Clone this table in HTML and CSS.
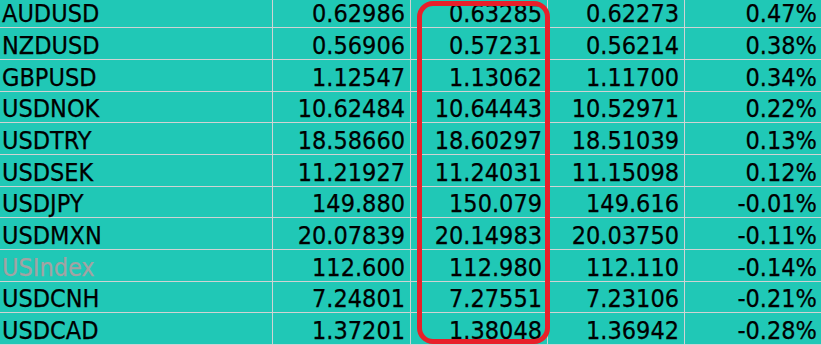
FILE: index.html
```html
<!DOCTYPE html>
<html>
<head>
<meta charset="utf-8">
<link rel="stylesheet" href="styles.css">
</head>
<body>
<div class="board">
  <div class="grid">
    <div class="c sym">AUDUSD</div><div class="c">0.62986</div><div class="c">0.63285</div><div class="c">0.62273</div><div class="c last">0.47%</div>
    <div class="c sym">NZDUSD</div><div class="c">0.56906</div><div class="c">0.57231</div><div class="c">0.56214</div><div class="c last">0.38%</div>
    <div class="c sym">GBPUSD</div><div class="c">1.12547</div><div class="c">1.13062</div><div class="c">1.11700</div><div class="c last">0.34%</div>
    <div class="c sym">USDNOK</div><div class="c">10.62484</div><div class="c">10.64443</div><div class="c">10.52971</div><div class="c last">0.22%</div>
    <div class="c sym">USDTRY</div><div class="c">18.58660</div><div class="c">18.60297</div><div class="c">18.51039</div><div class="c last">0.13%</div>
    <div class="c sym">USDSEK</div><div class="c">11.21927</div><div class="c">11.24031</div><div class="c">11.15098</div><div class="c last">0.12%</div>
    <div class="c sym">USDJPY</div><div class="c">149.880</div><div class="c">150.079</div><div class="c">149.616</div><div class="c last">-0.01%</div>
    <div class="c sym">USDMXN</div><div class="c">20.07839</div><div class="c">20.14983</div><div class="c">20.03750</div><div class="c last">-0.11%</div>
    <div class="c sym muted">USIndex</div><div class="c">112.600</div><div class="c">112.980</div><div class="c">112.110</div><div class="c last">-0.14%</div>
    <div class="c sym">USDCNH</div><div class="c">7.24801</div><div class="c">7.27551</div><div class="c">7.23106</div><div class="c last">-0.21%</div>
    <div class="c sym">USDCAD</div><div class="c">1.37201</div><div class="c">1.38048</div><div class="c">1.36942</div><div class="c last">-0.28%</div>
  </div>
  <div class="highlight"></div>
</div>
</body>
</html>
```
FILE: styles.css
```css
html, body {
  margin: 0;
  padding: 0;
  background: #20c8b6;
  overflow: hidden;
}
.board {
  position: relative;
  width: 821px;
  height: 345px;
  overflow: hidden;
  font-family: "DejaVu Sans Condensed", "DejaVu Sans", sans-serif;
  font-stretch: semi-condensed;
  font-size: 25px;
  color: #000;
  -webkit-text-stroke: 0.25px currentColor;
}
.grid {
  display: grid;
  margin-top: -4px;
  grid-template-columns: 273px 138px 137px 137px 136px;
  grid-template-rows: 32px 32px 32px 31px 32px 32px 31px 32px 32px 31px 32px;
}
.c {
  box-sizing: border-box;
  border-right: 1px solid #cfd3d3;
  border-bottom: 1px solid #cfd3d3;
  display: flex;
  align-items: center;
  justify-content: flex-end;
  padding-top: 3px;
  padding-right: 5px;
  white-space: nowrap;
  line-height: 1;
}
.c.sym {
  justify-content: flex-start;
  padding-left: 2px;
  padding-right: 0;
}
.c.last {
  border-right: none;
  padding-right: 4px;
}
.muted {
  color: #a3a3a3;
}
.highlight {
  position: absolute;
  left: 417px;
  top: 1px;
  width: 133px;
  height: 343px;
  box-sizing: border-box;
  border: 5px solid #e8202a;
  border-radius: 16px;
}
```
